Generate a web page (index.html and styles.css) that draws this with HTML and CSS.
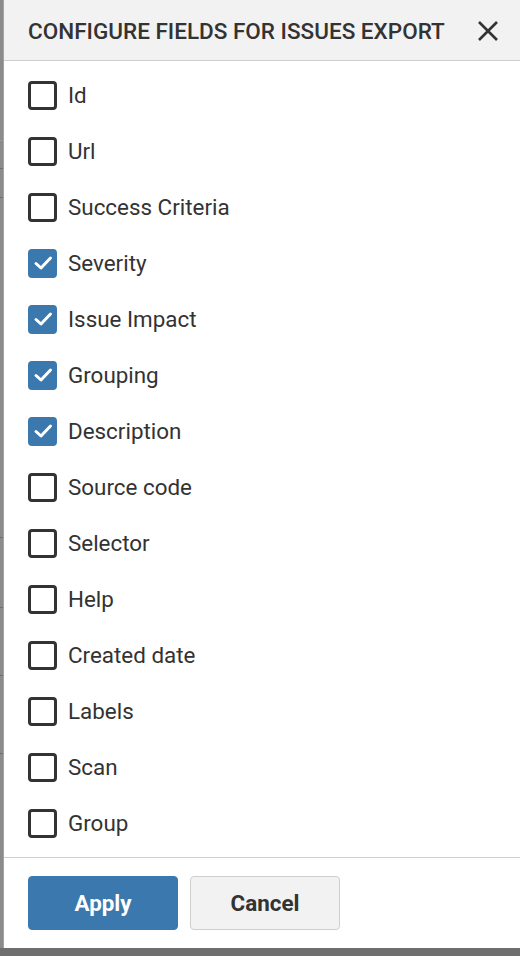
FILE: index.html
```html
<!DOCTYPE html>
<html lang="en">
<head>
<meta charset="utf-8">
<title>Configure fields for issues export</title>
<link rel="stylesheet" href="styles.css">
</head>
<body>
<div class="page">
  <div class="page-line l1"></div>
  <div class="page-line l2"></div>
  <div class="page-line l3"></div>
  <div class="page-line l4"></div>
  <div class="page-line l5"></div>
  <div class="page-line l6"></div>
  <div class="page-line l7"></div>
</div>
<div class="overlay"></div>
<div class="dialog" role="dialog" aria-labelledby="dlg-title">
  <header class="dialog-header">
    <h2 id="dlg-title" class="dialog-title">CONFIGURE FIELDS FOR ISSUES EXPORT</h2>
    <button class="close-btn" aria-label="Close">
      <svg width="22" height="22" viewBox="0 0 22 22"><path d="M2 2 L20 20 M20 2 L2 20" stroke="#333" stroke-width="2.6" fill="none"/></svg>
    </button>
  </header>
  <div class="dialog-body">
    <label class="field"><span class="box"></span><span class="label">Id</span></label>
    <label class="field"><span class="box"></span><span class="label">Url</span></label>
    <label class="field"><span class="box"></span><span class="label">Success Criteria</span></label>
    <label class="field"><span class="box checked"><svg width="20" height="16" viewBox="0 0 20 16"><path d="M3 8.5 L8 13 L17.5 3" stroke="#fff" stroke-width="3" fill="none" stroke-linecap="round" stroke-linejoin="round"/></svg></span><span class="label">Severity</span></label>
    <label class="field"><span class="box checked"><svg width="20" height="16" viewBox="0 0 20 16"><path d="M3 8.5 L8 13 L17.5 3" stroke="#fff" stroke-width="3" fill="none" stroke-linecap="round" stroke-linejoin="round"/></svg></span><span class="label">Issue Impact</span></label>
    <label class="field"><span class="box checked"><svg width="20" height="16" viewBox="0 0 20 16"><path d="M3 8.5 L8 13 L17.5 3" stroke="#fff" stroke-width="3" fill="none" stroke-linecap="round" stroke-linejoin="round"/></svg></span><span class="label">Grouping</span></label>
    <label class="field"><span class="box checked"><svg width="20" height="16" viewBox="0 0 20 16"><path d="M3 8.5 L8 13 L17.5 3" stroke="#fff" stroke-width="3" fill="none" stroke-linecap="round" stroke-linejoin="round"/></svg></span><span class="label">Description</span></label>
    <label class="field"><span class="box"></span><span class="label">Source code</span></label>
    <label class="field"><span class="box"></span><span class="label">Selector</span></label>
    <label class="field"><span class="box"></span><span class="label">Help</span></label>
    <label class="field"><span class="box"></span><span class="label">Created date</span></label>
    <label class="field"><span class="box"></span><span class="label">Labels</span></label>
    <label class="field"><span class="box"></span><span class="label">Scan</span></label>
    <label class="field"><span class="box"></span><span class="label">Group</span></label>
  </div>
  <footer class="dialog-footer">
    <button class="btn btn-primary">Apply</button>
    <button class="btn btn-secondary">Cancel</button>
  </footer>
</div>
</body>
</html>
```

FILE: styles.css
```css
html, body {
  margin: 0;
  padding: 0;
}
body {
  width: 520px;
  height: 956px;
  overflow: hidden;
  background: #8a8a8a;
  font-family: Roboto, "Liberation Sans", Arial, sans-serif;
  position: relative;
}
.page {
  position: absolute;
  left: 0;
  top: 0;
  width: 520px;
  height: 956px;
  background: #8b8b8b;
}
.page-line {
  position: absolute;
  left: 0;
  width: 520px;
  height: 1px;
  background: #6e6e6e;
}
.l1 { top: 140px; background: #9a9a9a; }
.l2 { top: 168px; }
.l3 { top: 197px; }
.l4 { top: 537px; }
.l5 { top: 607px; }
.l6 { top: 675px; }
.l7 { top: 753px; }
.overlay {
  position: absolute;
  left: 0;
  top: 948px;
  width: 520px;
  height: 8px;
  background: #6f6f6f;
}
.dialog {
  position: absolute;
  left: 4px;
  top: 0;
  width: 516px;
  height: 948px;
  background: #fff;
  display: flex;
  flex-direction: column;
  box-shadow: -1px 0 0 #a3a3a3;
}
.dialog-header {
  height: 60px;
  background: #f2f2f2;
  border-bottom: 1px solid #cfcfcf;
  display: flex;
  align-items: center;
  justify-content: space-between;
  padding: 0 20px 0 24px;
  box-sizing: content-box;
}
.dialog-title {
  margin: 0;
  font-size: 22.5px;
  font-weight: 500;
  color: #333;
  letter-spacing: 0;
  padding-top: 1px;
}
.close-btn {
  border: 0;
  background: none;
  padding: 0;
  width: 24px;
  height: 24px;
  display: flex;
  align-items: center;
  justify-content: center;
  cursor: pointer;
  margin-top: 1px;
}
.dialog-body {
  padding: 6px 24px 6px 24px;
  display: flex;
  flex-direction: column;
}
.field {
  height: 56px;
  display: flex;
  align-items: center;
  gap: 11px;
  cursor: pointer;
}
.box {
  width: 29px;
  height: 29px;
  box-sizing: border-box;
  border: 3px solid #333;
  border-radius: 4px;
  display: flex;
  align-items: center;
  justify-content: center;
  background: #fff;
}
.box.checked {
  background: #3a78ad;
  border-color: #3a78ad;
}
.label {
  font-size: 22.4px;
  color: #333;
}
.dialog-footer {
  border-top: 1px solid #cfcfcf;
  padding: 18px 24px;
  display: flex;
  gap: 12px;
}
.btn {
  width: 150px;
  height: 54px;
  border-radius: 4px;
  font-family: Roboto, "Liberation Sans", Arial, sans-serif;
  font-size: 22.4px;
  font-weight: 700;
  cursor: pointer;
}
.btn-primary {
  background: #3a78ad;
  color: #fff;
  border: 1px solid #3a78ad;
}
.btn-secondary {
  background: #f2f2f2;
  color: #333;
  border: 1px solid #cfcfcf;
}
```
